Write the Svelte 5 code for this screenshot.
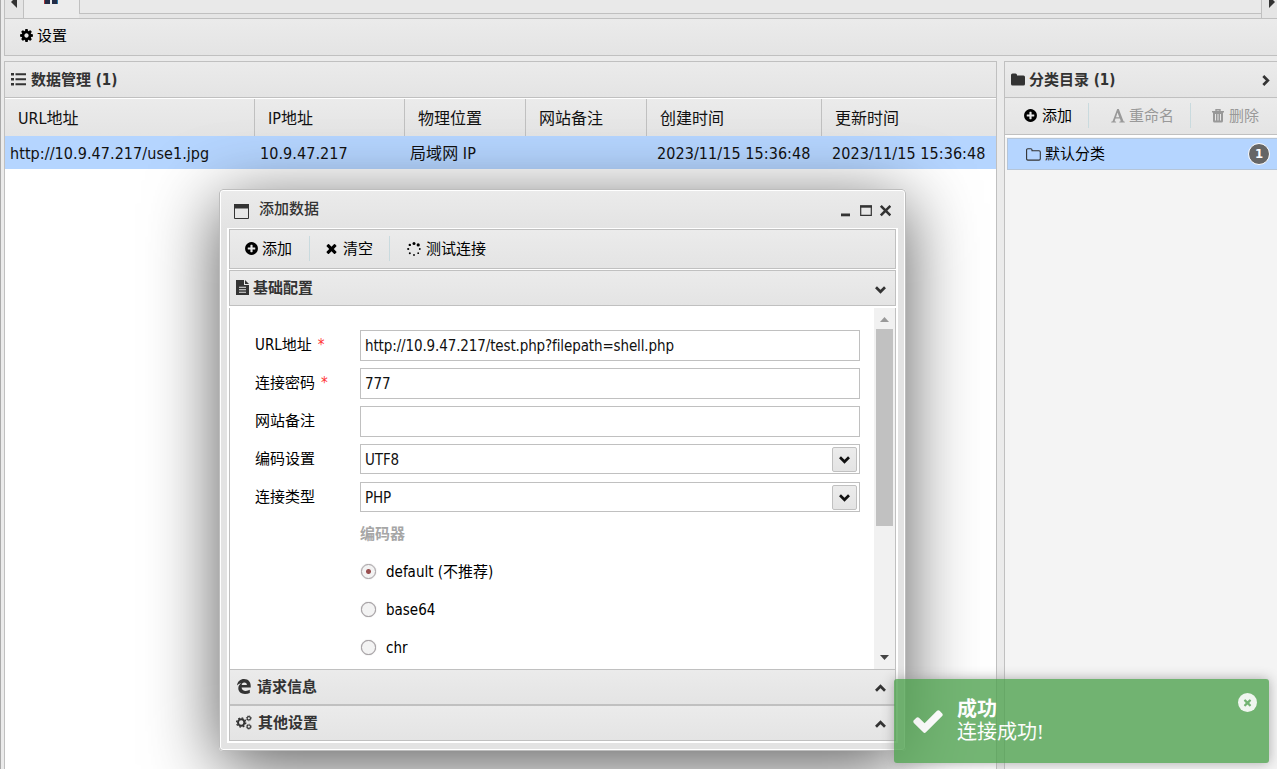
<script lang="ts">
  const columns = [
    { title: 'URL地址', value: 'http://10.9.47.217/use1.jpg' },
    { title: 'IP地址', value: '10.9.47.217' },
    { title: '物理位置', value: '局域网 IP' },
    { title: '网站备注', value: '' },
    { title: '创建时间', value: '2023/11/15 15:36:48', date: true },
    { title: '更新时间', value: '2023/11/15 15:36:48', date: true }
  ];

  const fields = [
    { label: 'URL地址', required: true, value: 'http://10.9.47.217/test.php?filepath=shell.php' },
    { label: '连接密码', required: true, value: '777' },
    { label: '网站备注', value: '' },
    { label: '编码设置', value: 'UTF8', select: true },
    { label: '连接类型', value: 'PHP', select: true }
  ];

  const encoders = ['default (不推荐)', 'base64', 'chr'];
  let encoder = $state('default (不推荐)');

  const cog = 'M1152 896q0-106-75-181t-181-75-181 75-75 181 75 181 181 75 181-75 75-181zm512-109v222q0 12-8 23t-20 13l-185 28q-19 54-39 91 35 50 107 138 10 12 10 25t-9 23q-27 37-99 108t-94 71q-12 0-26-9l-138-108q-44 23-91 38-16 136-29 186-7 28-36 28h-222q-14 0-24.500-8.500t-11.500-21.500l-28-184q-49-16-90-37l-141 107q-10 9-25 9-14 0-25-11-126-114-165-168-7-10-7-23 0-12 8-23 15-21 51-66.500t54-70.500q-27-50-41-99l-183-27q-13-2-21-12.500t-8-23.500v-222q0-12 8-23t19-13l186-28q14-46 39-92-40-57-107-138-10-12-10-24 0-10 9-23 26-36 98.500-107.500t94.500-71.500q13 0 26 10l138 107q44-23 91-38 16-136 29-186 7-28 36-28h222q14 0 24.500 8.500t11.500 21.500l28 184q49 16 90 37l142-107q9-9 24-9 13 0 25 10 129 119 165 170 7 8 7 22 0 12-8 23-15 21-51 66.500t-54 70.500q26 50 41 98l183 28q13 2 21 12.500t8 23.500z';
  const plus = 'M1344 960v-128q0-26-19-45t-45-19h-256v-256q0-26-19-45t-45-19h-128q-26 0-45 19t-19 45v256h-256q-26 0-45 19t-19 45v128q0 26 19 45t45 19h256v256q0 26 19 45t45 19h128q26 0 45-19t19-45v-256h256q26 0 45-19t19-45zm320-64q0 209-103 385.500t-279.500 279.500-385.500 103-385.500-103-279.500-279.500-103-385.500 103-385.500 279.500-279.500 385.500-103 385.500 103 279.500 279.500 103 385.500z';
  const times = 'M1490 1322q0 40-28 68l-136 136q-28 28-68 28t-68-28l-294-294-294 294q-28 28-68 28t-68-28l-136-136q-28-28-28-68t28-68l294-294-294-294q-28-28-28-68t28-68l136-136q28-28 68-28t68 28l294 294 294-294q28-28 68-28t68 28l136 136q28 28 28 68t-28 68l-294 294 294 294q28 28 28 68z';
  const check = 'M1671 566q0 40-28 68l-724 724-136 136q-28 28-68 28t-68-28l-136-136-362-362q-28-28-28-68t28-68l136-136q28-28 68-28t68 28l294 295 656-657q28-28 68-28t68 28l136 136q28 28 28 68z';
</script>

{#snippet icon(path: string, size: number)}
  <svg width={size} height={size} viewBox="0 0 1792 1792"><path d={path} fill="currentColor" /></svg>
{/snippet}

{#snippet chevron(turn: number)}
  <svg class="chevron" width="13" height="13" viewBox="0 0 13 13">
    <path d="M2 4.300L6.500 8.800 11 4.300" fill="none" stroke="currentColor" stroke-width="2.700" transform="rotate({turn} 6.500 6.500)" />
  </svg>
{/snippet}

<div class="app">
  <div class="tabbar">
    <div class="scroll-left"><svg width="6" height="12" viewBox="0 0 6 12"><path d="M6 0v12L0 6z" fill="#333" /></svg></div>
    <div class="tab">
      <svg width="14" height="5" viewBox="0 0 14 5"><path d="M0 0h6v4H0zM8 0h6v4H8z" fill="#222b45" /><path d="M0 0h1v4H0z" fill="#a33" /><path d="M13 0h1v4h-1z" fill="#2878a8" /></svg>
    </div>
    <div class="tab-space"></div>
    <div class="scroll-right"><svg width="6" height="12" viewBox="0 0 6 12"><path d="M0 0v12l6-6z" fill="#333" /></svg></div>
  </div>

  <div class="toolbar main-toolbar">{@render icon(cog, 15)}<span>设置</span></div>

  <div class="panes">
    <section class="pane data-pane">
      <header class="pane-header">
        <svg width="15" height="13" viewBox="0 0 15 13"><path d="M0 0h3v2.600H0zM0 5h3v2.600H0zM0 10h3v2.600H0zM4.500.3H15v2H4.500zM4.500 5.300H15v2H4.500zM4.500 10.300H15v2H4.500z" fill="currentColor" /></svg>
        <b>数据管理 (1)</b>
      </header>
      <div class="grid">
        {#each columns as column}
          <div class="th">{column.title}</div>
        {/each}
        {#each columns as column}
          <div class="td" class:date={column.date}>{column.value}</div>
        {/each}
      </div>
    </section>

    <section class="pane category-pane">
      <header class="pane-header">
        <svg width="14" height="13" viewBox="0 0 14 13"><path d="M0 2Q0 .5 1.500.5h3Q6 .5 6 2v.4h6.500Q14 2.400 14 4v7q0 1.500-1.500 1.500h-11Q0 12.500 0 11z" fill="currentColor" /></svg>
        <b>分类目录 (1)</b>
        {@render chevron(-90)}
      </header>
      <div class="toolbar category-toolbar">
        <button class="add">{@render icon(plus, 15)}添加</button>
        <i></i>
        <button class="rename" disabled>
          <svg width="14" height="14" viewBox="0 0 14 14"><path fill-rule="evenodd" d="M6.200 0h1.600l4.700 12.300 1.300.4v.9H8.300v-.9l1.500-.4-.9-2.700H4.500l-.9 2.700 1.500.4v.9H.2v-.9l1.400-.4zM6.500 3.600L5 8.300h3.300z" fill="currentColor" /></svg>重命名
        </button>
        <i></i>
        <button class="remove" disabled>
          <svg width="12" height="14" viewBox="0 0 12 14"><path d="M4 2V.8h4V2M0 2.700h12" fill="none" stroke="currentColor" stroke-width="1.400" /><path fill-rule="evenodd" d="M1 3h10v9q0 1.500-1.500 1.500h-7Q1 13.500 1 12zM3 5v6.500h1V5zm2.500 0v6.500h1V5zM8 5v6.500h1V5z" fill="currentColor" /></svg>删除
        </button>
      </div>
      <div class="category">
        <svg width="15" height="13" viewBox="0 0 15 13"><path d="M.6 2Q.6.800 1.800.8h3Q6 .8 6 2v.7h7q1.300 0 1.300 1.300v6.800q0 1.300-1.300 1.300H1.900Q.6 12.100.6 10.800z" fill="none" stroke="#333" stroke-width="1.100" /></svg>
        <span>默认分类</span>
        <em>1</em>
      </div>
    </section>
  </div>

  <div class="window">
    <div class="titlebar">
      <svg width="15" height="15" viewBox="0 0 15 15"><path d="M.5.5h14v14H.5z" fill="none" stroke="#333" /><path d="M0 0h15v4.500H0z" fill="#333" /></svg>
      <span class="caption">添加数据</span>
      <svg class="controls" width="50" height="14" viewBox="0 0 50 14">
        <path d="M0 9.500h9v2.800H0z" fill="#333" />
        <path d="M19.700 2h10.600v9.300H19.700z" fill="none" stroke="#333" stroke-width="1.200" /><path d="M19 1.300h12v2.400H19z" fill="#333" />
        <path d="M39.800 1.800l9.600 9.600M49.400 1.800l-9.600 9.600" stroke="#333" stroke-width="2.600" />
      </svg>
    </div>

    <div class="body">
      <div class="toolbar window-toolbar">
        <button class="add">{@render icon(plus, 15)}添加</button>
        <i></i>
        <button class="clear">{@render icon(times, 15)}清空</button>
        <i></i>
        <button class="test">
          <svg width="14" height="14" viewBox="0 0 14 14" fill="currentColor"><circle cx="7" cy="1.500" r="1.500" /><circle cx="11.200" cy="2.900" r="1.600" /><circle cx="12.800" cy="7" r=".9" /><circle cx="11.200" cy="11.200" r=".9" /><circle cx="7" cy="13" r=".9" /><circle cx="2.800" cy="11.200" r="1" /><circle cx="1.200" cy="7" r="1.100" /><circle cx="2.800" cy="2.900" r="1.200" /></svg>测试连接
        </button>
      </div>

      <div class="accordion first">
        <svg width="13" height="15" viewBox="0 0 13 15"><path fill-rule="evenodd" d="M0 0h8v5h5v10H0zM9 0l4 4H9zM3 6.800v1h7v-1zm0 2.500v1h7v-1zm0 2.500v1h7v-1z" fill="currentColor" /></svg>
        <b>基础配置</b>{@render chevron(0)}
      </div>
      <div class="form-area">
        <div class="form">
          {#each fields as field}
            <div class="field">
              <label for={field.label}>{field.label}{#if field.required}<span>*</span>{/if}</label>
              <div class="input" class:select={field.select} id={field.label}>
                {field.value}
                {#if field.select}<button>{@render chevron(0)}</button>{/if}
              </div>
            </div>
          {/each}
          <div class="encoder-title">编码器</div>
          {#each encoders as name}
            <button class="radio" onclick={() => encoder = name}>
              <span class:checked={encoder === name}></span>{name}
            </button>
          {/each}
        </div>
        <div class="scrollbar">
          <svg width="9" height="5" viewBox="0 0 9 5"><path d="M0 5l4.500-5L9 5z" fill="#999" /></svg>
          <div class="thumb"></div>
          <svg width="9" height="5" viewBox="0 0 9 5"><path d="M0 0l4.500 5L9 0z" fill="#444" /></svg>
        </div>
      </div>
      <div class="accordion request">
        <svg width="14" height="15" viewBox="0 0 14 15"><path d="M0 6.500C.6 2.300 3.400 0 7 0c4.300 0 6.700 2.900 6.700 6.800v1.700H4.600c.1 2.400 1.800 3.400 4.200 3.400 1.500 0 2.900-.4 4-1.100v3.100c-1.300.7-2.900 1.100-4.800 1.100-4.100 0-6.700-2.300-6.700-5.700 0-2.400 1.300-4.100 3.300-5C2.400 4.600 1 5.300 0 6.500zm4.700-.4h5.200C9.900 4.500 9 3.500 7.300 3.500S4.900 4.600 4.700 6.100z" fill="currentColor" /></svg>
        <b>请求信息</b>{@render chevron(180)}
      </div>
      <div class="accordion other">
        <svg width="16" height="15" viewBox="0 0 16 15" fill="none" stroke="currentColor"><circle cx="5.200" cy="7.500" r="3.200" stroke-width="2" /><circle cx="5.200" cy="7.500" r="4.600" stroke-width="1.300" stroke-dasharray="1.800 1.800" /><circle cx="12.800" cy="3.300" r="1.700" stroke-width="1.100" /><circle cx="12.800" cy="3.300" r="2.500" stroke-width=".8" stroke-dasharray="1 1" /><circle cx="12.800" cy="11.700" r="1.700" stroke-width="1.100" /><circle cx="12.800" cy="11.700" r="2.500" stroke-width=".8" stroke-dasharray="1 1" /></svg>
        <b>其他设置</b>{@render chevron(180)}
      </div>
    </div>
  </div>

  <div class="toast">
    {@render icon(check, 34)}
    <div><b>成功</b><p>连接成功!</p></div>
    <span class="dismiss">{@render icon(times, 11)}</span>
  </div>
</div>

<style>
  :global(body) {
    overflow: hidden;
  }

  .app {
    position: relative;
    display: flex;
    flex-direction: column;
    box-sizing: border-box;
    width: 1277px;
    height: 769px;
    padding-left: 4px;
    overflow: hidden;
    background: linear-gradient(90deg, #aaa 1px, #ebebeb 1px);
    font: 15px/20px "DejaVu Sans Condensed", "Noto Sans CJK SC", sans-serif;
    color: #000;
  }

  .app * {
    box-sizing: border-box;
  }

  svg {
    flex: none;
    display: block;
  }

  button {
    display: flex;
    align-items: center;
    padding: 0;
    border: none;
    background: none;
    font: inherit;
    color: inherit;
    white-space: nowrap;
  }

  button:disabled {
    color: #999;
  }

  .tabbar {
    display: flex;
    height: 18px;
    border-left: 1px solid #c0c0c0;
    background: #e5e5e5;
  }

  .scroll-left {
    width: 19px;
    padding: 0 0 0 6px;
    border-right: 1px solid #c0c0c0;
  }

  .scroll-left svg,
  .scroll-right svg {
    margin-top: -4px;
  }

  .tab {
    width: 55px;
    padding-left: 20px;
    background: #ececec;
  }

  .tab-space {
    flex: 1;
    height: 14px;
    border-left: 1px solid #c0c0c0;
    border-bottom: 1px solid #c0c0c0;
    background: #e9e9e9;
  }

  .scroll-right {
    width: 16px;
    padding-left: 7px;
    border-left: 1px solid #c0c0c0;
  }

  .toolbar {
    display: flex;
    align-items: center;
    border: 1px solid #c0c0c0;
    background: linear-gradient(#ebebeb, #e4e4e4);
  }

  .toolbar i {
    width: 1px;
    height: 25px;
    background: #c9dade;
  }

  .main-toolbar {
    height: 38px;
    padding: 0 0 3px 14px;
    gap: 3px;
    border-right: none;
  }

  .panes {
    display: flex;
    flex: 1;
    gap: 7px;
    padding-top: 5px;
  }

  .pane {
    border: 1px solid #c0c0c0;
    border-bottom: none;
    background: #fff;
  }

  .data-pane {
    width: 993px;
  }

  .category-pane {
    flex: 1;
    border-right: none;
    background: #f4f4f4;
  }

  .pane-header {
    display: flex;
    align-items: center;
    height: 36px;
    padding-left: 6px;
    gap: 5px;
    border-bottom: 1px solid #c0c0c0;
    background: linear-gradient(#ebebeb, #e4e4e4);
    color: #333;
  }

  .category-pane .pane-header {
    gap: 4px;
  }

  .pane-header .chevron {
    margin: 1px 5px 0 auto;
  }

  .grid {
    display: grid;
    grid-template-columns: 250px 150px 121px 121px 175px 1fr;
    grid-template-rows: 37px 33px;
    padding-top: 1px;
    font-size: 16px;
    color: #111;
  }

  .th {
    padding: 10px 0 0 13px;
    border-right: 1px solid #c0c0c0;
    background: linear-gradient(#ebebeb, #e4e4e4);
  }

  .th:nth-child(6) {
    border-right: none;
  }

  .td {
    padding: 8px 0 0 5px;
    background: #b5d5ff;
    white-space: nowrap;
    letter-spacing: 0.070px;
  }

  .date {
    padding-left: 10px;
  }

  .category-toolbar {
    height: 37px;
    padding-bottom: 1px;
    border-width: 0 0 1px;
    box-shadow: 0 2px #fff;
  }

  .category-toolbar .add {
    width: 83px;
    padding-left: 18px;
    gap: 4px;
  }

  .category-toolbar .rename {
    width: 101px;
    padding-left: 22px;
    gap: 4px;
  }

  .category-toolbar .remove {
    padding-left: 21px;
    gap: 5px;
  }

  .category {
    display: flex;
    align-items: center;
    height: 32px;
    margin: 3px 0 0 2px;
    padding: 0 7px 0 18px;
    gap: 4px;
    border: 1px solid #b5c5d8;
    border-right: none;
    background: #b5d5ff;
  }

  .category em {
    width: 22px;
    height: 22px;
    margin-left: auto;
    border: 1px solid #fff;
    border-radius: 50%;
    background: #666;
    font: bold 13px/20px "DejaVu Sans Condensed", sans-serif;
    text-align: center;
    color: #fff;
  }

  .window {
    position: absolute;
    left: 219px;
    top: 189px;
    width: 687px;
    height: 562px;
    padding: 0 7px 7px;
    border: 1px solid #bdbdbd;
    border-radius: 4px;
    background: linear-gradient(#ebebeb, #e3e3e3 40px);
    box-shadow: inset 0 0 0 1px #fff, 0 14px 70px rgba(0, 0, 0, 0.650);
  }

  .titlebar {
    display: flex;
    align-items: center;
    height: 38px;
    padding: 5px 7px 0 7px;
  }

  .titlebar .caption {
    margin: -5px 0 0 10px;
    font-weight: 500;
    color: #333;
  }

  .controls {
    margin: -1px 0 0 auto;
  }

  .body {
    display: flex;
    flex-direction: column;
    height: 515px;
    padding: 1px 2px 2px;
    background: #fff;
  }

  .window-toolbar {
    height: 40px;
    margin-bottom: 1px;
    padding-bottom: 1px;
  }

  .window-toolbar .add {
    width: 79px;
    padding-left: 14px;
    gap: 3px;
  }

  .window-toolbar .clear {
    width: 79px;
    padding-left: 14px;
    gap: 4px;
  }

  .window-toolbar .test {
    padding-left: 17px;
    gap: 5px;
  }

  .accordion {
    display: flex;
    align-items: center;
    flex: none;
    height: 36px;
    padding: 0 8px 1px 6px;
    gap: 4px;
    border: 1px solid #c0c0c0;
    background: linear-gradient(#ebebeb, #e4e4e4);
    color: #333;
  }

  .accordion b,
  .pane-header b {
    font-weight: 700;
  }

  .accordion .chevron {
    margin: 3px 0 0 auto;
  }

  .request {
    padding-left: 7px;
    gap: 6px;
  }

  .other {
    gap: 6px;
  }

  .form-area {
    display: flex;
    flex: 1;
    min-height: 0;
    margin-top: 2px;
    border: solid #c0c0c0;
    border-width: 0 1px;
  }

  .form {
    display: flex;
    flex-direction: column;
    width: 644px;
    padding: 22px 0 0 25px;
    overflow: hidden;
  }

  .field {
    display: flex;
    flex: none;
    height: 38px;
  }

  .field label {
    width: 105px;
    padding-top: 5px;
  }

  .field label span {
    margin-left: 6px;
    color: #f33;
  }

  .input {
    display: flex;
    width: 500px;
    height: 31px;
    padding: 5px 2px 0 4px;
    border: 1px solid #c0c0c0;
    color: #111;
    letter-spacing: -0.120px;
  }

  .select {
    height: 30px;
  }

  .input button {
    justify-content: center;
    width: 25px;
    height: 25px;
    margin: -3px 0 0 auto;
    border: 1px solid #c0c0c0;
    border-radius: 2px;
    background: linear-gradient(#ececec, #e4e4e4);
  }

  .encoder-title {
    flex: none;
    height: 38px;
    padding: 4px 0 0 105px;
    font-weight: 700;
    color: #a6a6a6;
  }

  .radio {
    flex: none;
    height: 38px;
    padding: 0 0 11px 106px;
  }

  .radio span {
    width: 15px;
    height: 15px;
    margin-right: 10px;
    border: 1px solid #a39da1;
    border-radius: 50%;
    background: #f3f3f3;
    box-shadow: 0 0 1px #999;
  }

  .radio .checked {
    background: radial-gradient(#994f50 2px, #f3f3f3 3px);
  }

  .scrollbar {
    display: flex;
    flex-direction: column;
    align-items: center;
    flex: 1;
    padding: 9px 0 9px;
    background: #f1f1f1;
  }

  .scrollbar svg:last-child {
    margin-top: auto;
  }

  .thumb {
    width: 17px;
    height: 197px;
    margin-top: 7px;
    background: #c1c1c1;
  }

  .toast {
    position: absolute;
    left: 894px;
    top: 679px;
    display: flex;
    width: 375px;
    height: 84px;
    padding: 19px 12px 0 17px;
    border-radius: 3px;
    background: #51a351;
    box-shadow: 0 0 12px #999;
    color: #fff;
    font: 20px/23px "Liberation Serif", "Noto Sans CJK SC", serif;
    opacity: 0.800;
  }

  .toast > svg {
    margin-top: 6px;
  }

  .toast div {
    margin-left: 12px;
  }

  .toast b,
  .toast p {
    display: block;
    margin: 0;
  }

  .dismiss {
    display: flex;
    align-items: center;
    justify-content: center;
    width: 19px;
    height: 19px;
    margin: -5px 0 0 auto;
    border-radius: 50%;
    background: #fff;
    color: #51a351;
    opacity: 0.900;
  }
</style>
